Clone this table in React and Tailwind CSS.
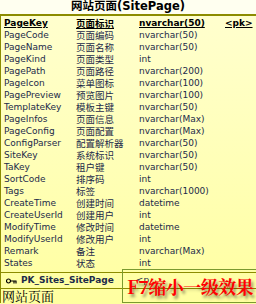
const columns = [
  ['PageCode', '页面编码', 'nvarchar(50)'],
  ['PageName', '页面名称', 'nvarchar(50)'],
  ['PageKind', '页面类型', 'int'],
  ['PagePath', '页面路径', 'nvarchar(200)'],
  ['PageIcon', '菜单图标', 'nvarchar(100)'],
  ['PagePreview', '预览图片', 'nvarchar(100)'],
  ['TemplateKey', '模板主键', 'nvarchar(50)'],
  ['PageInfos', '页面信息', 'nvarchar(Max)'],
  ['PageConfig', '页面配置', 'nvarchar(Max)'],
  ['ConfigParser', '配置解析器', 'nvarchar(50)'],
  ['SiteKey', '系统标识', 'nvarchar(50)'],
  ['TaKey', '租户键', 'nvarchar(50)'],
  ['SortCode', '排序码', 'int'],
  ['Tags', '标签', 'nvarchar(1000)'],
  ['CreateTime', '创建时间', 'datetime'],
  ['CreateUserId', '创建用户', 'int'],
  ['ModifyTime', '修改时间', 'datetime'],
  ['ModifyUserId', '修改用户', 'int'],
  ['Remark', '备注', 'nvarchar(Max)'],
  ['States', '状态', 'int'],
];

const latin = "font-['DejaVu_Sans','Noto_Sans_CJK_SC',sans-serif]";

const Row = ({ name, cn, type, pk }) => (
  <div className={`flex h-[12px] overflow-hidden text-[9px] leading-[12px] text-[#1c2a4a] ${pk ? 'font-bold underline text-black' : ''}`}>
    <span className="w-[75px] shrink-0 pl-[3px]">{name}</span>
    <span className="w-[63px] shrink-0 font-['Noto_Sans_CJK_SC',sans-serif] text-[9.5px] leading-[12px]">{cn}</span>
    <span className="w-[86px] shrink-0">{type}</span>
    {pk && <span>&lt;pk&gt;</span>}
  </div>
);

export default function App() {
  return (
    <div className={`relative h-[304px] w-[256px] overflow-hidden bg-gradient-to-b from-[#ffffd0] to-[#ffffa0] ${latin}`}>
      <div className="flex h-[16px] items-center justify-center border-b-2 border-[#8c8c00] bg-[#fffff0] pb-[1px] text-[11.5px] font-bold leading-none text-black">
        网站页面(SitePage)
      </div>

      <div className="border-l border-[#8c8c00] pt-[1px]">
        <Row name="PageKey" cn="页面标识" type="nvarchar(50)" pk />
        {columns.map(([name, cn, type]) => (
          <Row key={name} name={name} cn={cn} type={type} />
        ))}

        <div className="mt-[3px] flex h-[17px] items-center gap-[4px] border-y border-[#8c8c00] pl-[5px] text-[9px] font-bold text-[#1c2a4a]">
          <svg width="11" height="6" viewBox="0 0 11 6">
            <circle cx="2.5" cy="3" r="2" fill="none" stroke="#000" strokeWidth="1.2" />
            <path d="M4.5 3H10.5M8 3V5.5M10 3V5.5" stroke="#000" strokeWidth="1.2" fill="none" />
          </svg>
          <span>PK_Sites_SitePage</span>
          <span className="ml-[18px] font-normal">&lt;p</span>
        </div>

        <div className="h-[14px] pl-[1px] font-['Noto_Serif_CJK_SC','Noto_Sans_CJK_SC',serif] text-[13px] leading-[14px] text-black">
          网站页面
        </div>
      </div>

      <div className="absolute left-[122px] top-[269px] flex h-[34px] w-[136px] items-center border border-[#7a9a30] pl-[4px]">
        <span className="font-['Noto_Serif_CJK_SC','Noto_Sans_CJK_SC',serif] text-[18px] font-bold leading-none tracking-[-0.5px] text-[#ff0000] [text-shadow:2px_3px_3px_rgba(0,0,0,0.45)]">
          F7缩小一级效果
        </span>
      </div>
    </div>
  );
}
